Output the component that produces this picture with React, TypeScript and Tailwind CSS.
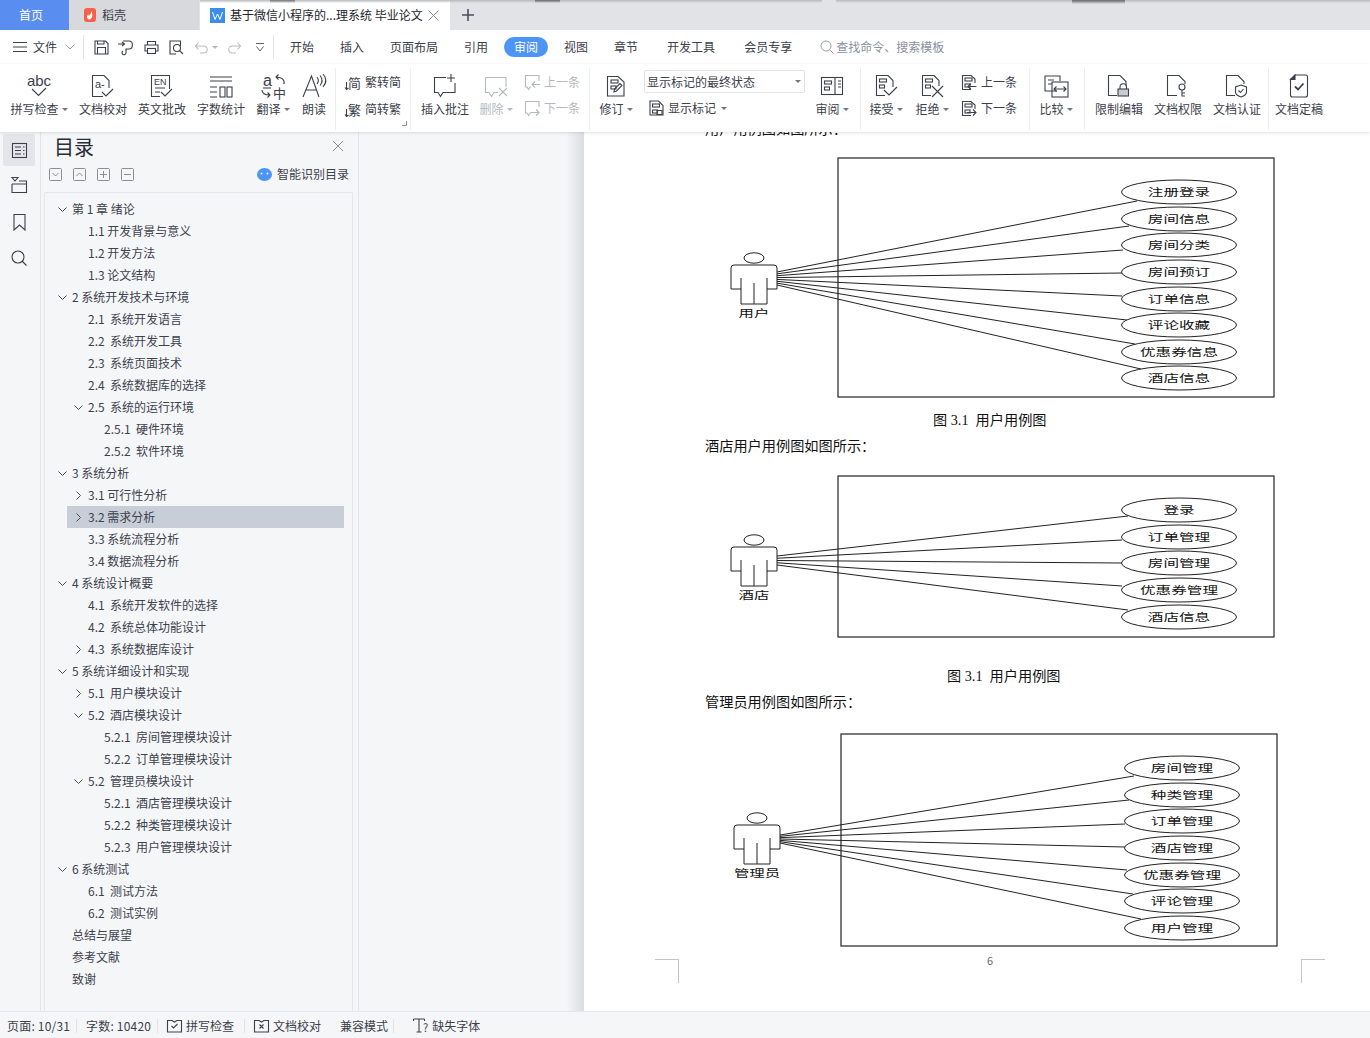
import type { ReactNode } from 'react';

const ink = '#3c404b';
const faint = '#b4b8c0';

function Ico({ w = 26, h = 26, color = ink, sw = 1.1, children }: { w?: number; h?: number; color?: string; sw?: number; children: ReactNode }) {
  return (
    <svg width={w} height={h} viewBox={`0 0 ${w} ${h}`} fill="none" stroke={color} strokeWidth={sw} className="shrink-0 overflow-visible">
      {children}
    </svg>
  );
}

// little "tracked change" marks used inside several doc icons
const Marks = ({ x = 6, y = 6 }: { x?: number; y?: number }) => (
  <>
    <rect x={x} y={y} width="7" height="3" />
    <rect x={x} y={y + 6} width="5" height="3" />
  </>
);

const Caret = ({ color = '#70757f' }: { color?: string }) => (
  <span className="block shrink-0 w-0 h-0 border-x-[3px] border-x-transparent border-t-[3px]" style={{ borderTopColor: color }} />
);

function Big({ label, caret, icon, className, muted }: { label: string; caret?: boolean; icon: ReactNode; className: string; muted?: boolean }) {
  return (
    <div className={`flex flex-col items-center shrink-0 ${className}`}>
      <div className="mt-[9px] h-[26px] flex items-center justify-center">{icon}</div>
      <div className={`h-[20px] flex items-center gap-[3px] whitespace-nowrap text-[12px] ${muted ? 'text-[#b4b8c0]' : 'text-[#3c404b]'}`}>
        {label}
        {caret && <Caret color={muted ? faint : '#70757f'} />}
      </div>
    </div>
  );
}

const Sep = ({ className }: { className: string }) => <div className={`w-px h-[62px] mt-[4px] bg-[#eceef1] shrink-0 ${className}`} />;

function SmallRow({ icon, label, muted }: { icon: ReactNode; label: string; muted?: boolean }) {
  return (
    <div className={`h-[26px] flex items-center gap-[4px] text-[12px] whitespace-nowrap ${muted ? 'text-[#b4b8c0]' : 'text-[#3c404b]'}`}>
      {icon}
      {label}
    </div>
  );
}

function DocSmall({ arrow, color = ink }: { arrow: 'left' | 'right'; color?: string }) {
  return (
    <Ico w={16} h={17} color={color}>
      <path d="M10 15.5H1.5V1.5H10L14 5V9" />
      <Marks x={4} y={4} />
      {arrow === 'left' ? <path d="M15.5 12.5H7M10 9.5L7 12.5L10 15.5" /> : <path d="M6 12.5H15M12 9.5L15 12.5L12 15.5" />}
    </Ico>
  );
}

function BubbleSmall({ arrow, color }: { arrow: 'left' | 'right'; color: string }) {
  return (
    <Ico w={16} h={17} color={color}>
      <path d="M15 7V1.5H1.5V13H3L4.5 15.5L6 13H7" />
      {arrow === 'left' ? <path d="M16 10.5H8M11 7.5L8 10.5L11 13.5" /> : <path d="M7 12.5H15M12 9.5L15 12.5L12 15.5" />}
    </Ico>
  );
}

function ConvertIcon({ glyph }: { glyph: string }) {
  return (
    <Ico w={16} h={17}>
      <text x="3" y="13.5" fontSize="13" fill={ink} stroke="none" fontFamily="Noto Sans CJK SC">{glyph}</text>
      <path d="M1.5 8V15.5M0 13.5L1.5 15.5L3.5 14" />
    </Ico>
  );
}

const DocOutline = ({ w = 20, h = 22 }: { w?: number; h?: number }) => <path d={`M1.5 ${h}V1.5H${w - 6}L${w} 7V${h}H1.5Z`} />;

function TopBar() {
  return (
    <div className="relative h-[30px] bg-[#e1e3e7] flex items-stretch shrink-0">
      <div className="w-[69px] bg-[#5a8df0] text-white text-[12px] flex items-center justify-center pr-[7px]">首页</div>
      <div className="w-[130px] bg-[#d8d9dd] text-[#3c404b] text-[12px] flex items-center pl-[15px] gap-[6px]">
        <svg width="12" height="14" viewBox="0 0 12 14">
          <rect width="12" height="14" rx="3" fill="#f4624a" />
          <path d="M3 9C3 11 5 12 6.5 11C9 9.5 8.5 6 7.5 3C7 6 5.5 7 5 8C4.5 7.5 4.5 7 4.5 6.5C3.5 7 3 8 3 9Z" fill="#fff" />
        </svg>
        稻壳
      </div>
      <div className="ml-px w-[250px] bg-white text-[#22252c] text-[12px] flex items-center pl-[10px] whitespace-nowrap">
        <svg width="15" height="15" viewBox="0 0 15 15" className="mr-[5px]">
          <rect width="15" height="15" fill="#3a8eea" />
          <path d="M2.5 4L5 11.5L7.5 6L10 11.5L12.5 4" fill="none" stroke="#fff" strokeWidth="1" />
        </svg>
        基于微信小程序的...理系统 毕业论文
        <svg width="11" height="11" viewBox="0 0 11 11" stroke="#8b8f98" strokeWidth="1" className="ml-[5px]">
          <path d="M0.5 0.5L10.5 10.5M10.5 0.5L0.5 10.5" />
        </svg>
      </div>
      <div className="ml-[12px] flex items-center">
        <svg width="12" height="12" viewBox="0 0 12 12" stroke="#4b5060" strokeWidth="1.6">
          <path d="M6 0V12M0 6H12" />
        </svg>
      </div>
      {/* dark blur of the window behind, bleeding over the top edge */}
      <div className="absolute top-0 left-[200px] w-[622px] h-[3px] bg-gradient-to-b from-[#b5b7bb] to-transparent" />
      <div className="absolute top-0 left-[836px] w-[534px] h-[3px] bg-gradient-to-b from-[#b5b7bb] to-transparent" />
      <div className="absolute top-0 left-[270px] w-[25px] h-[3px] bg-gradient-to-b from-[#77797d] to-transparent" />
      <div className="absolute top-0 left-[535px] w-[25px] h-[3px] bg-gradient-to-b from-[#6a6c70] to-transparent" />
      <div className="absolute top-0 left-[1072px] w-[53px] h-[4px] bg-gradient-to-b from-[#6a6c70] to-transparent" />
    </div>
  );
}

function MenuBar() {
  const tabs: [string, string][] = [
    ['开始', 'ml-[16px]'],
    ['插入', 'ml-[26px]'],
    ['页面布局', 'ml-[26px]'],
    ['引用', 'ml-[26px]'],
  ];
  const after: [string, string][] = [
    ['视图', 'ml-[16px]'],
    ['章节', 'ml-[26px]'],
    ['开发工具', 'ml-[29px]'],
    ['会员专享', 'ml-[29px]'],
  ];
  return (
    <div className="h-[34px] bg-white flex items-center pl-[13px] text-[12px] text-[#3c404b] whitespace-nowrap shrink-0">
      <svg width="14" height="10" viewBox="0 0 14 10" stroke={ink} strokeWidth="1">
        <path d="M0 .5H14M0 5H14M0 9.5H14" />
      </svg>
      <span className="ml-[6px]">文件</span>
      <svg width="10" height="6" viewBox="0 0 10 6" fill="none" stroke="#9a9ea6" className="ml-[8px]">
        <path d="M.5 .5L5 5L9.5 .5" />
      </svg>
      <div className="ml-[8px] w-px h-[24px] bg-[#e3e5e8]" />
      <div className="ml-[10px] flex items-center">
        <Ico w={15} h={15}>
          <path d="M1 1H11.5L14 3.5V14H1V1Z" />
          <path d="M3.5 14V7.5H11.5V14M3.5 1V4H10V1" />
        </Ico>
        <span className="ml-[9px] flex">
          <Ico w={16} h={15}>
            <path d="M0 4H6M4 2L6.5 4L4 6" />
            <path d="M5 1H11C15.5 1 15.5 9 11 9H8V12.5A2 2 0 1 1 5 11" />
          </Ico>
        </span>
        <span className="ml-[10px] flex">
          <Ico w={15} h={15}>
            <path d="M3.5 5V1.5H11.5V5M3.5 11H1V5H14V11H11.5" />
            <rect x="3.5" y="8.5" width="8" height="5" />
          </Ico>
        </span>
        <span className="ml-[10px] flex">
          <Ico w={15} h={15}>
            <path d="M7 14H1V1H11.5V6" />
            <circle cx="8" cy="8" r="3.5" />
            <path d="M10.5 10.5L14 14" />
          </Ico>
        </span>
        <span className="ml-[11px] flex">
          <Ico w={13} h={13} color="#b9bdc5">
            <path d="M0.5 5H8.5C13.5 5 13.5 12 8.5 12H5M3.5 1.5L0.5 5L3.5 8.5" />
          </Ico>
        </span>
        <span className="ml-[4px] mr-[10px]">
          <Caret color={faint} />
        </span>
        <Ico w={13} h={13} color="#b9bdc5">
          <path d="M12.5 5H4.5C-.5 5 -.5 12 4.5 12H8M9.5 1.5L12.5 5L9.5 8.5" />
        </Ico>
        <svg width="8" height="9" viewBox="0 0 8 9" fill="none" stroke="#5d616b" className="ml-[15px]">
          <path d="M0 .5H8M.5 3.5L4 8L7.5 3.5" />
        </svg>
      </div>
      <div className="ml-[9px] w-px h-[24px] bg-[#e3e5e8]" />
      {tabs.map(([t, m]) => (
        <span key={t} className={m}>
          {t}
        </span>
      ))}
      <span className="ml-[16px] w-[44px] h-[20px] rounded-full bg-[#4c94f6] text-white flex items-center justify-center">审阅</span>
      {after.map(([t, m]) => (
        <span key={t} className={m}>
          {t}
        </span>
      ))}
      <svg width="14" height="14" viewBox="0 0 14 14" fill="none" stroke="#9aa1ad" className="ml-[28px]">
        <circle cx="6" cy="6" r="5" />
        <path d="M9.5 9.5L13.5 13.5" />
      </svg>
      <span className="ml-[2px] text-[#8a90a0]">查找命令、搜索模板</span>
    </div>
  );
}

function Ribbon() {
  return (
    <div className="relative z-10 h-[68px] bg-white flex items-start pl-[10px] shadow-[0_1px_3px_rgba(0,0,0,0.12)] shrink-0">
      <Big
        className="w-[58px]"
        label="拼写检查"
        caret
        icon={
          <Ico w={24} h={24}>
            <text x="12" y="12" textAnchor="middle" fontSize="15" fill={ink} stroke="none" fontFamily="Liberation Sans">abc</text>
            <path d="M5 15L11.5 21.5L19 14" />
          </Ico>
        }
      />
      <Big
        className="w-[48px] ml-[11px]"
        label="文档校对"
        icon={
          <Ico w={24} h={24}>
            <path d="M12 22.5H1.5V1.5H13L18 6.5V14" />
            <text x="4" y="14" fontSize="11" fill={ink} stroke="none" fontFamily="Liberation Sans">a-</text>
            <path d="M11 18L15 22L22 15" />
          </Ico>
        }
      />
      <Big
        className="w-[48px] ml-[11px]"
        label="英文批改"
        icon={
          <Ico w={24} h={24}>
            <path d="M10 22.5H1.5V1.5H19.5V15" />
            <text x="4" y="11" fontSize="9" fill={ink} stroke="none" fontFamily="Liberation Sans">EN</text>
            <path d="M5 14H15M5 18H10M11 18L15 22L22 15" />
          </Ico>
        }
      />
      <Big
        className="w-[48px] ml-[11px]"
        label="字数统计"
        icon={
          <Ico w={24} h={24}>
            <path d="M1 3H23M1 7H23M1 13H8M1 18H8M1 23H8" />
            <rect x="11" y="13" width="5" height="10" />
            <rect x="18" y="13" width="5" height="10" />
          </Ico>
        }
      />
      <Big
        className="w-[34px] ml-[11px]"
        label="翻译"
        caret
        icon={
          <Ico w={26} h={24}>
            <text x="3" y="12" fontSize="16" fill={ink} stroke="none" fontFamily="Liberation Sans">a</text>
            <text x="13" y="23.5" fontSize="13" fill={ink} stroke="none" fontFamily="Noto Sans CJK SC">中</text>
            <path d="M3 14H11" />
            <path d="M24 10C25 5 21 3 16 3M18.5 .5L16 3L18.5 5.5M2 16C2 20 5 21 10 21M7.5 18.5L10 21L7.5 23.5" />
          </Ico>
        }
      />
      <Big
        className="w-[24px] ml-[12px]"
        label="朗读"
        icon={
          <Ico w={25} h={24}>
            <path d="M1 23L9.5 2L17 23M4 16H14.5" />
            <path d="M15 3C16.5 5 16.5 8 15 10M18 1.5C20.5 4.5 20.5 8.5 18 11.5M21 0C24.5 4 24.5 9 21 13" />
          </Ico>
        }
      />
      <Sep className="ml-[9px]" />
      <div className="relative ml-[9px] w-[56px] mt-[5px] shrink-0">
        <SmallRow label="繁转简" icon={<ConvertIcon glyph="简" />} />
        <div className="mt-[1px]">
          <SmallRow label="简转繁" icon={<ConvertIcon glyph="繁" />} />
        </div>
        <svg width="5" height="5" viewBox="0 0 5 5" stroke="#8a8e96" className="absolute left-[57px] top-[52px]">
          <path d="M4.5 0V4.5H0" fill="none" />
        </svg>
      </div>
      <Sep className="ml-[9px]" />
      <Big
        className="w-[48px] ml-[10px]"
        label="插入批注"
        icon={
          <Ico w={24} h={24}>
            <path d="M13 3.5H1.5V18.5H5L7.5 22.5L10 18.5H22V9" />
            <path d="M18 0V8M14 4H22" />
          </Ico>
        }
      />
      <Big
        className="w-[32px] ml-[11px]"
        label="删除"
        caret
        muted
        icon={
          <Ico w={24} h={24} color={faint}>
            <path d="M14 18.5H10L7.5 22.5L5 18.5H1.5V3.5H22V13" />
            <path d="M15 14L23 22M23 14L15 22" />
          </Ico>
        }
      />
      <div className="ml-[12px] w-[56px] mt-[5px] shrink-0">
        <SmallRow muted label="上一条" icon={<BubbleSmall arrow="left" color={faint} />} />
        <SmallRow muted label="下一条" icon={<BubbleSmall arrow="right" color={faint} />} />
      </div>
      <Sep className="ml-[9px]" />
      <Big
        className="w-[32px] ml-[10px]"
        label="修订"
        caret
        icon={
          <Ico w={20} h={22}>
            <DocOutline w={18} h={21} />
            <Marks x={5} y={5} />
            <path d="M8 17L8.5 14L14 8.5L16 10.5L10.5 16L8 17Z" />
          </Ico>
        }
      />
      <div className="ml-[12px] w-[161px] mt-[6px] shrink-0">
        <div className="h-[23px] border border-[#e2e4e7] rounded-[2px] flex items-center justify-between pl-[2px] pr-[3px] text-[12px] text-[#3c404b] whitespace-nowrap">
          显示标记的最终状态
          <Caret />
        </div>
        <div className="ml-[5px] h-[26px] mt-[2px] flex items-center gap-[4px] text-[12px] text-[#3c404b]">
          <Ico w={15} h={16}>
            <path d="M1 15V1H9.5L14 5.5V15H1Z" />
            <Marks x={3.5} y={4} />
            <rect x="8" y="10.5" width="5" height="4" />
          </Ico>
          显示标记
          <span className="ml-[1px]">
            <Caret />
          </span>
        </div>
      </div>
      <Big
        className="w-[32px] ml-[11px]"
        label="审阅"
        caret
        icon={
          <Ico w={22} h={20}>
            <rect x=".5" y="1.5" width="21" height="17" />
            <path d="M14 1.5V18.5M17 5H20M17 8H20M17 11H20" />
            <Marks x={3.5} y={5} />
          </Ico>
        }
      />
      <Sep className="ml-[12px]" />
      <Big
        className="w-[32px] ml-[9px]"
        label="接受"
        caret
        icon={
          <Ico w={23} h={24}>
            <path d="M10 21.5H1.5V1.5H13L18 6.5V13" />
            <Marks x={4.5} y={5} />
            <path d="M9 16L14 21L22 13" />
          </Ico>
        }
      />
      <Big
        className="w-[32px] ml-[14px]"
        label="拒绝"
        caret
        icon={
          <Ico w={23} h={24}>
            <path d="M10 21.5H1.5V1.5H13L18 6.5V12" />
            <Marks x={4.5} y={5} />
            <path d="M11 12L22 23M22 12L11 23" />
          </Ico>
        }
      />
      <div className="ml-[13px] w-[55px] mt-[5px] shrink-0">
        <SmallRow label="上一条" icon={<DocSmall arrow="left" />} />
        <SmallRow label="下一条" icon={<DocSmall arrow="right" />} />
      </div>
      <Sep className="ml-[13px]" />
      <Big
        className="w-[32px] ml-[10px]"
        label="比较"
        caret
        icon={
          <Ico w={25} h={23}>
            <path d="M13 16H1V1H16V6" />
            <path d="M4 5H10M4 9H8" />
            <rect x="8" y="7" width="16" height="15" />
            <path d="M10 14H22M12.5 11.5L10 14L12.5 16.5M19.5 11.5L22 14L19.5 16.5" />
          </Ico>
        }
      />
      <Sep className="ml-[12px]" />
      <Big
        className="w-[48px] ml-[10px]"
        label="限制编辑"
        icon={
          <Ico w={24} h={24}>
            <path d="M10 21.5H1.5V1.5H13L19 7.5V12" />
            <rect x="11" y="15" width="10.5" height="7" fill="#c9cbd0" />
            <path d="M13 15V13A3.2 3.2 0 0 1 19.5 13V15" />
          </Ico>
        }
      />
      <Big
        className="w-[48px] ml-[11px]"
        label="文档权限"
        icon={
          <Ico w={24} h={24}>
            <path d="M11 21.5H1.5V1.5H13L19 7.5V10" />
            <circle cx="16" cy="13" r="3" />
            <path d="M16 16V22.5M16 19H19M16 22H19" />
          </Ico>
        }
      />
      <Big
        className="w-[48px] ml-[11px]"
        label="文档认证"
        icon={
          <Ico w={24} h={24}>
            <path d="M10 21.5H1.5V1.5H13L19 7.5V10" />
            <path d="M16 11L21.5 13V18C21.5 20 19 22 16 23C13 22 10.5 20 10.5 18V13L16 11Z" />
            <path d="M13.5 16.5L15.5 18.5L18.5 15" />
          </Ico>
        }
      />
      <Sep className="ml-[7px]" />
      <Big
        className="w-[48px] ml-[6px]"
        label="文档定稿"
        icon={
          <Ico w={20} h={24}>
            <path d="M6 1H16.5A2 2 0 0 1 18.5 3V21A2 2 0 0 1 16.5 23H3.5A2 2 0 0 1 1.5 21V5.5L6 1Z" />
            <path d="M6 1V5.5H1.5L6 1Z" fill={ink} />
            <path d="M6 12.5L9 15.5L14.5 9.5" strokeWidth="1.8" />
          </Ico>
        }
      />
    </div>
  );
}

function Rail() {
  return (
    <div className="w-[41px] shrink-0 border-r border-[#e3e5e9] flex flex-col items-center pt-[2px] pr-[2px]">
      <div className="w-[32px] h-[32px] bg-[#e3e5ea] rounded-[2px] flex items-center justify-center">
        <Ico w={15} h={15}>
          <rect x=".5" y=".5" width="14" height="14" />
          <path d="M3 4H9M11 4H12.5M3 7.5H9M11 7.5H12.5M3 11H9M11 11H12.5" />
        </Ico>
      </div>
      <div className="mt-[11px]">
        <Ico w={16} h={16}>
          <path d="M1 .5H7L4 4L1 .5Z" />
          <path d="M1 7V15.5H15.5V4H8M1 7H15.5" />
        </Ico>
      </div>
      <div className="mt-[21px]">
        <Ico w={13} h={17}>
          <path d="M1 .5H12V16L6.5 11L1 16V.5Z" />
        </Ico>
      </div>
      <div className="mt-[19px]">
        <Ico w={16} h={16}>
          <circle cx="7" cy="7" r="6" />
          <path d="M11 11L15.5 15.5" />
        </Ico>
      </div>
    </div>
  );
}

type Toc = [string, number, ('d' | 'r')?];

const toc: Toc[] = [
  ['第 1 章 绪论', 0, 'd'],
  ['1.1 开发背景与意义', 1],
  ['1.2 开发方法', 1],
  ['1.3 论文结构', 1],
  ['2 系统开发技术与环境', 0, 'd'],
  ['2.1  系统开发语言', 1],
  ['2.2  系统开发工具', 1],
  ['2.3  系统页面技术', 1],
  ['2.4  系统数据库的选择', 1],
  ['2.5  系统的运行环境', 1, 'd'],
  ['2.5.1  硬件环境', 2],
  ['2.5.2  软件环境', 2],
  ['3 系统分析', 0, 'd'],
  ['3.1 可行性分析', 1, 'r'],
  ['3.2 需求分析', 1, 'r'],
  ['3.3 系统流程分析', 1],
  ['3.4 数据流程分析', 1],
  ['4 系统设计概要', 0, 'd'],
  ['4.1  系统开发软件的选择', 1],
  ['4.2  系统总体功能设计', 1],
  ['4.3  系统数据库设计', 1, 'r'],
  ['5 系统详细设计和实现', 0, 'd'],
  ['5.1  用户模块设计', 1, 'r'],
  ['5.2  酒店模块设计', 1, 'd'],
  ['5.2.1  房间管理模块设计', 2],
  ['5.2.2  订单管理模块设计', 2],
  ['5.2  管理员模块设计', 1, 'd'],
  ['5.2.1  酒店管理模块设计', 2],
  ['5.2.2  种类管理模块设计', 2],
  ['5.2.3  用户管理模块设计', 2],
  ['6 系统测试', 0, 'd'],
  ['6.1  测试方法', 1],
  ['6.2  测试实例', 1],
  ['总结与展望', 0],
  ['参考文献', 0],
  ['致谢', 0],
];

const indent = ['ml-[6px]', 'ml-[22px]', 'ml-[38px]'];

function TocPanel() {
  const tool = (d: string) => (
    <svg width="13" height="13" viewBox="0 0 13 13" fill="none" stroke="#8a8e97">
      <rect x=".5" y=".5" width="12" height="12" rx="1" />
      <path d={d} />
    </svg>
  );
  return (
    <div className="w-[318px] shrink-0 border-r border-[#e3e5e9] flex flex-col pl-[3px] pr-[5px]">
      <div className="h-[60px] shrink-0 relative">
        <div className="flex items-start justify-between pl-[10px] pr-[10px] h-[33px] -mt-[1px]">
          <span className="text-[20px] leading-[32px] text-[#2a2d35]">目录</span>
          <svg width="10" height="10" viewBox="0 0 10 10" stroke="#8a8e97" className="mt-[10px]">
            <path d="M0 0L10 10M10 0L0 10" />
          </svg>
        </div>
        <div className="mt-[1px] flex items-center gap-[11px] pl-[5px] pr-[4px]">
          {tool('M3.5 5L6.5 8L9.5 5')}
          {tool('M3.5 8L6.5 5L9.5 8')}
          {tool('M3 6.5H10M6.5 3V10')}
          {tool('M3 6.5H10')}
          <div className="ml-auto flex items-center gap-[5px] text-[12px] text-[#3c404b]">
            <svg width="15" height="13" viewBox="0 0 15 13">
              <ellipse cx="7.5" cy="6.5" rx="7.5" ry="6.5" fill="#4c94f6" />
              <circle cx="4.5" cy="5.5" r="1" fill="#fff" />
              <circle cx="10.5" cy="5.5" r="1" fill="#fff" />
            </svg>
            智能识别目录
          </div>
        </div>
      </div>
      <div className="flex-1 min-h-0 border border-b-0 border-[#e4e6ea] rounded-t-[2px] pt-[5px] pb-[4px] text-[12px] text-[#3d424d]">
        {toc.map(([label, level, arrow], i) => (
          <div
            key={i}
            className={`h-[22px] flex items-center pl-[3px] mr-[8px] whitespace-pre ${indent[level]} ${label === '3.2 需求分析' ? 'bg-[#c7ced8]' : ''}`}
          >
            <span className="w-[16px] mr-[2px] flex items-center justify-center">
              {arrow === 'd' && (
                <svg width="9" height="5" viewBox="0 0 9 5" fill="none" stroke="#4c505a">
                  <path d="M.5 .5L4.5 4.5L8.5 .5" />
                </svg>
              )}
              {arrow === 'r' && (
                <svg width="5" height="9" viewBox="0 0 5 9" fill="none" stroke="#4c505a">
                  <path d="M.5 .5L4.5 4.5L.5 8.5" />
                </svg>
              )}
            </span>
            {label}
          </div>
        ))}
      </div>
    </div>
  );
}

interface Case {
  cy: number;
  label: string;
  end: [number, number];
}

function UseCase({ box, frame, dx, dy, actor, cases, fan }: {
  box: [number, number, number, number];
  frame: [number, number, number, number];
  dx: number;
  dy: number;
  actor: string;
  cases: Case[];
  fan: [number, number];
}) {
  const sx = 777 + dx;
  const step = (fan[1] - fan[0]) / (cases.length - 1);
  return (
    <svg width={box[2]} height={box[3]} viewBox={box.join(' ')} fill="none" stroke="#222" strokeWidth="1" className="block ml-[146px] shrink-0">
      <rect x={frame[0]} y={frame[1]} width={frame[2]} height={frame[3]} strokeWidth="1.2" />
      {cases.map((c, i) => (
        <line key={c.label} x1={sx} y1={fan[0] + i * step} x2={c.end[0]} y2={c.end[1]} />
      ))}
      <g transform={`translate(${dx} ${dy})`}>
        <ellipse cx="754" cy="258" rx="10" ry="5.2" />
        <path d="M734 265H774Q777 265 777 268V289H767V304H741V289H731V268Q731 265 734 265Z" />
        <path d="M741 289V278M767 289V278M754 283V304" />
      </g>
      <text
        x={754 + dx}
        y={317 + dy}
        textAnchor="middle"
        fontSize="10.5"
        fill="#111"
        stroke="none"
        textLength={actor.length * 15.4}
        lengthAdjust="spacingAndGlyphs"
      >
        {actor}
      </text>
      {cases.map((c) => (
        <g key={c.label}>
          <ellipse cx={1179 + dx} cy={c.cy} rx="57.5" ry="12" fill="#fff" />
          <text
            x={1179 + dx}
            y={c.cy + 4}
            textAnchor="middle"
            fontSize="10.5"
            fill="#111"
            stroke="none"
            textLength={c.label.length * 15.6}
            lengthAdjust="spacingAndGlyphs"
          >
            {c.label}
          </text>
        </g>
      ))}
    </svg>
  );
}

const userCases: Case[] = [
  { cy: 192, label: '注册登录', end: [1137, 201] },
  { cy: 219, label: '房间信息', end: [1129, 226] },
  { cy: 245, label: '房间分类', end: [1123, 250] },
  { cy: 272, label: '房间预订', end: [1122, 273] },
  { cy: 299, label: '订单信息', end: [1122, 296] },
  { cy: 325, label: '评论收藏', end: [1127, 320] },
  { cy: 352, label: '优惠券信息', end: [1135, 344] },
  { cy: 378, label: '酒店信息', end: [1141, 369] },
];

const hotelCases: Case[] = [
  { cy: 510, label: '登录', end: [1128, 516] },
  { cy: 537, label: '订单管理', end: [1122, 540] },
  { cy: 563, label: '房间管理', end: [1122, 563] },
  { cy: 590, label: '优惠券管理', end: [1122, 586] },
  { cy: 617, label: '酒店信息', end: [1128, 610] },
];

const adminCases: Case[] = [
  { cy: 768, label: '房间管理', end: [1134, 776] },
  { cy: 795, label: '种类管理', end: [1129, 800] },
  { cy: 821, label: '订单管理', end: [1125, 824] },
  { cy: 848, label: '酒店管理', end: [1125, 847] },
  { cy: 875, label: '优惠券管理', end: [1127, 870] },
  { cy: 901, label: '评论管理', end: [1133, 894] },
  { cy: 928, label: '用户管理', end: [1141, 919] },
];

function DocPage() {
  const line = 'h-[22px] leading-[22px] text-[14.2px] text-[#111] shrink-0';
  const caption = `${line} font-['Liberation_Serif','Noto_Sans_CJK_SC',serif] whitespace-pre`;
  return (
    <div className="flex-1 min-w-0 bg-white flex flex-col">
      <div className={`${line} ml-[121px] -mt-[15px]`}>用户用例图如图所示：</div>
      <div className="mt-[16px]">
        <UseCase box={[730, 155, 550, 247]} frame={[838, 158, 436, 239]} dx={0} dy={0} actor="用户" cases={userCases} fan={[272, 285]} />
      </div>
      <div className={`${caption} mt-[7px] ml-[349px]`}>图 3.1  用户用例图</div>
      <div className={`${line} mt-[3px] ml-[121px]`}>酒店用户用例图如图所示：</div>
      <div className="mt-[14px]">
        <UseCase box={[730, 470, 550, 175]} frame={[838, 476, 436, 161]} dx={0} dy={282} actor="酒店" cases={hotelCases} fan={[556, 565]} />
      </div>
      <div className={`${caption} mt-[20px] ml-[363px]`}>图 3.1  用户用例图</div>
      <div className={`${line} mt-[3px] ml-[121px]`}>管理员用例图如图所示：</div>
      <div className="mt-[18px]">
        <UseCase box={[730, 730, 550, 220]} frame={[841, 734, 436, 212]} dx={3} dy={560} actor="管理员" cases={adminCases} fan={[835, 843]} />
      </div>
      <div className="mt-[9px] ml-[71px] w-[670px] flex justify-between">
        <div className="w-[24px] h-[24px] border-t border-r border-[#c3c5c9]" />
        <span className="text-[11px] leading-[5px] -mt-[1px] text-[#666]">6</span>
        <div className="w-[24px] h-[24px] border-t border-l border-[#c3c5c9]" />
      </div>
    </div>
  );
}

function StatusBar() {
  const sep = <div className="w-px h-[14px] bg-[#e1e3e7]" />;
  return (
    <div className="h-[27px] shrink-0 bg-[#f5f6f8] border-t border-[#e4e6ea] flex items-center pl-[7px] pt-[1px] text-[12px] text-[#3c404b] whitespace-nowrap">
      <span className="w-[64px] tracking-[0.2px]">页面: 10/31</span>
      <span className="mx-[5px]">{sep}</span>
      <span className="ml-[4px] w-[66px] tracking-[0.2px]">字数: 10420</span>
      <span className="mx-[5px]">{sep}</span>
      <span className="ml-[4px] flex">
        <Ico w={15} h={14}>
          <path d="M.5 1.5H5L7.5 3L10 1.5H14.5V13H.5V1.5Z" />
          <path d="M4.5 7L6.5 9L10.5 5" />
        </Ico>
      </span>
      <span className="ml-[4px]">拼写检查</span>
      <span className="ml-[10px]">{sep}</span>
      <span className="ml-[9px] flex">
        <Ico w={15} h={14}>
          <path d="M.5 1.5H5L7.5 3L10 1.5H14.5V13H.5V1.5Z" />
          <path d="M5.5 5.5L9.5 9.5M9.5 5.5L5.5 9.5" />
        </Ico>
      </span>
      <span className="ml-[4px]">文档校对</span>
      <span className="ml-[19px]">兼容模式</span>
      <span className="ml-[5px]">{sep}</span>
      <span className="ml-[19px] flex">
        <Ico w={15} h={15}>
          <path d="M.5 1H11.5M6 1V14M3.5 14H8.5M.5 1V3M11.5 1V3" />
        </Ico>
      </span>
      <span className="-ml-[5px] mt-[3px] text-[11px] leading-none">?</span>
      <span className="ml-[4px]">缺失字体</span>
    </div>
  );
}

export default function App() {
  return (
    <div className="w-[1370px] h-[1038px] overflow-hidden flex flex-col bg-[#f5f6f8] font-['Noto_Sans_CJK_SC','Liberation_Sans',sans-serif]">
      <TopBar />
      <MenuBar />
      <Ribbon />
      <div className="flex-1 min-h-0 flex overflow-hidden">
        <Rail />
        <TocPanel />
        <div className="w-[225px] shrink-0 bg-gradient-to-r from-[#f5f6f8] from-[92%] to-[#dcdde1]" />
        <DocPage />
      </div>
      <StatusBar />
    </div>
  );
}
